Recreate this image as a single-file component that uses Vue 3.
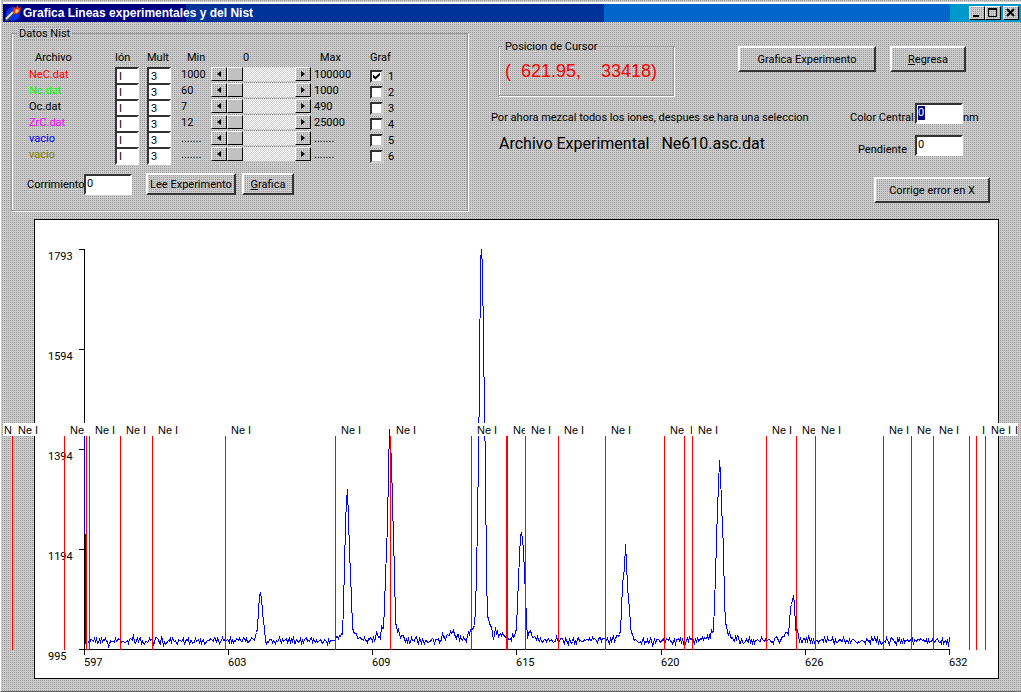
<script setup>
import { reactive, ref } from 'vue'

const rows = reactive([
  { file: 'NeC.dat', color: '#ff0000', ion: 'I', mult: '3', min: '1000', max: '100000', on: true },
  { file: 'Nc.dat', color: '#00ff00', ion: 'I', mult: '3', min: '60', max: '1000', on: false },
  { file: 'Oc.dat', color: '#000000', ion: 'I', mult: '3', min: '7', max: '490', on: false },
  { file: 'ZrC.dat', color: '#ff00ff', ion: 'I', mult: '3', min: '12', max: '25000', on: false },
  { file: 'vacio', color: '#0000ff', ion: 'I', mult: '3', min: '.......', max: '.......', on: false },
  { file: 'vacio', color: '#808000', ion: 'I', mult: '3', min: '.......', max: '.......', on: false }
])
const levels = reactive([0, 0, 0, 0, 0, 0])
const shift = ref('0')
const center = ref('0')
const slope = ref('0')

const yTicks = [1793, 1594, 1394, 1194, 995].map((v, i) => ({ v, y: 249 + i * 100 }))
const xTicks = [
  [597, 84], [603, 228], [609, 372], [615, 516], [620, 661], [626, 805], [632, 949]
].map(([v, x]) => ({ v, x }))

const lines = [12, 64, 86, 89, 120, 152, 225, 335, 390, 471, 506, 507, 525, 558, 605, 664,
  684, 692, 766, 796, 815, 883, 911, 933, 969, 976, 985]

// Line labels: box start, box width, visible text.
const labels = [
  [3, 9, 'N'], [12, 26, 'Ne I'], [64, 26, 'Ne'], [89, 26, 'Ne I'], [120, 26, 'Ne I'], [152, 26, 'Ne I'],
  [225, 26, 'Ne I'], [335, 26, 'Ne I'], [390, 26, 'Ne I'], [471, 26, 'Ne I'], [507, 18, 'Ne'],
  [525, 26, 'Ne I'], [558, 26, 'Ne I'], [605, 26, 'Ne I'], [664, 20, 'Ne'], [684, 8, 'I'],
  [692, 26, 'Ne I'], [766, 26, 'Ne I'], [796, 19, 'Ne'], [815, 26, 'Ne I'], [883, 26, 'Ne I'],
  [911, 22, 'Ne'], [933, 26, 'Ne I'], [976, 9, 'I'], [985, 33, 'Ne I']
].map(([x, w, t]) => ({ x, w, t, tx: x === 3 ? 4 : x + 6 }))

const profile = [
  [87, 641], [247, 640], [255, 638], [257, 628], [258, 610], [259, 595], [260, 593], [261, 597], [262, 612],
  [264, 630], [265, 640], [330, 641], [336, 637], [342, 634], [343, 605], [344, 566], [345, 525], [346, 500],
  [347, 489], [348, 520], [349, 549], [350, 575], [351, 598], [352, 627], [354, 633], [358, 637], [363, 639],
  [373, 638], [380, 635], [383, 628], [384, 605], [385, 577], [386, 550], [387, 525], [388, 470], [389, 429],
  [390, 440], [391, 464], [392, 500], [393, 540], [394, 570], [395, 622], [397, 630], [399, 632], [402, 637],
  [408, 640], [442, 640], [447, 636], [452, 632], [458, 637], [467, 637], [471, 630], [474, 625], [475, 608],
  [476, 575], [477, 520], [478, 455], [479, 380], [480, 260], [481, 249], [482, 268], [483, 340], [484, 410],
  [485, 470], [486, 575], [487, 615], [489, 622], [491, 629], [493, 635], [495, 631], [498, 634], [505, 637],
  [510, 640], [515, 632], [516, 628], [517, 602], [518, 580], [519, 555], [520, 536], [521, 532], [522, 539],
  [523, 550], [524, 572], [525, 595], [526, 620], [527, 636], [529, 632], [532, 637], [538, 640], [610, 640],
  [618, 637], [620, 630], [621, 610], [622, 584], [624, 568], [625, 544], [626, 562], [627, 587], [629, 608],
  [630, 625], [632, 636], [635, 639], [645, 641], [690, 640], [700, 639], [710, 635], [713, 629], [714, 602],
  [715, 577], [716, 540], [717, 508], [718, 485], [719, 460], [720, 472], [721, 505], [722, 525], [723, 550],
  [724, 600], [725, 622], [727, 630], [729, 635], [733, 638], [740, 640], [775, 640], [783, 637], [788, 633],
  [789, 622], [790, 607], [792, 600], [793, 595], [794, 603], [795, 628], [797, 634], [799, 640], [949, 641]
]

function buildTrace() {
  let seed = 97
  const rnd = () => {
    seed = (seed * 16807) % 2147483647
    return seed / 2147483647
  }
  const out = ['M84.5 436V534', 'M85.5 534V644']
  let k = 0
  let d = ''
  for (let x = 87; x <= 949; x++) {
    while (k < profile.length - 2 && profile[k + 1][0] < x) k++
    const [x0, y0] = profile[k]
    const [x1, y1] = profile[k + 1]
    const y = y0 + ((y1 - y0) * (x - x0)) / (x1 - x0)
    const spike = rnd() > 0.94 ? 1.9 : 1
    const noise = y > 628 ? (rnd() + rnd() - 1) * 4.5 * spike : 0
    d += `${d ? 'L' : 'M'}${x + 0.5} ${Math.round(y + noise) + 0.5}`
  }
  out.push(d)
  return out.join('')
}
const trace = buildTrace()
</script>

<template>
  <main class="window">
    <header class="title-bar">
      <svg class="app-icon" width="16" height="16" viewBox="0 0 16 16" aria-hidden="true">
        <circle cx="8" cy="9" r="7" fill="#0033ee" />
        <path d="M0 16V13L7 6L10 8L3 16Z" fill="#444" />
        <path d="M1 14L8 7" stroke="#ddd" stroke-width="2" />
        <path d="M8 7L9 2L11 4L12 0L14 3L16 2L15 7L12 9L9 9Z" fill="#ff3300" />
        <path d="M10 7L11 4L13 5L14 4L13 7L11 8Z" fill="#ffdd88" />
      </svg>
      <h1>Grafica Lineas experimentales y del Nist</h1>
      <div class="window-buttons">
        <button type="button" aria-label="Minimizar">
          <svg width="12" height="10" viewBox="0 0 12 10"><path d="M2 8h6" stroke="#000" stroke-width="2" /></svg>
        </button>
        <button type="button" aria-label="Maximizar">
          <svg width="12" height="10" viewBox="0 0 12 10"><path d="M1.500 1v7.500h8V1" fill="none" stroke="#000" /><path d="M1 1h9" stroke="#000" stroke-width="2" /></svg>
        </button>
        <button type="button" class="close" aria-label="Cerrar">
          <svg width="12" height="10" viewBox="0 0 12 10"><path d="M2 1L9 8M9 1L2 8" stroke="#000" stroke-width="2" /></svg>
        </button>
      </div>
    </header>

    <section class="controls">
      <fieldset class="nist">
        <legend>Datos Nist</legend>
        <table>
          <colgroup>
            <col class="c-file" /><col class="c-ion" /><col class="c-mult" /><col class="c-min" />
            <col class="c-bar" /><col class="c-max" /><col class="c-graf" />
          </colgroup>
          <thead>
            <tr>
              <th class="indent">Archivo</th><th>Ión</th><th>Mult</th><th class="indent">Min</th>
              <th class="zero">0</th><th class="indent">Max</th><th>Graf</th>
            </tr>
          </thead>
          <tbody>
            <tr v-for="(row, i) in rows" :key="i">
              <td :style="{ color: row.color }">{{ row.file }}</td>
              <td><input v-model="row.ion" class="field cell" type="text" :aria-label="'Ión ' + (i + 1)" /></td>
              <td><input v-model="row.mult" class="field cell" type="text" :aria-label="'Mult ' + (i + 1)" /></td>
              <td>{{ row.min }}</td>
              <td>
                <div class="scroll">
                  <button type="button" aria-label="Menos" @click="levels[i] = Math.max(0, levels[i] - 1)">
                    <svg width="4" height="6" viewBox="0 0 4 6"><path d="M4 0v6L0 3z" /></svg>
                  </button>
                  <input v-model.number="levels[i]" type="range" min="0" max="100" :aria-label="'Nivel ' + (i + 1)" />
                  <button type="button" aria-label="Más" @click="levels[i] = Math.min(100, levels[i] + 1)">
                    <svg width="4" height="6" viewBox="0 0 4 6"><path d="M0 0v6L4 3z" /></svg>
                  </button>
                </div>
              </td>
              <td>{{ row.max }}</td>
              <td><label class="check"><input v-model="row.on" type="checkbox" />{{ i + 1 }}</label></td>
            </tr>
          </tbody>
        </table>
        <div class="actions">
          <label for="shift">Corrimiento</label>
          <input id="shift" v-model="shift" class="field" type="text" />
          <button type="button" class="btn read">Lee Experimento</button>
          <button type="button" class="btn plot"><u>G</u>rafica</button>
        </div>
      </fieldset>

      <div class="side">
        <div class="side-row">
          <fieldset class="cursor">
            <legend>Posicion de Cursor</legend>
            <output>(&nbsp; 621.95, &nbsp;&nbsp; 33418)</output>
          </fieldset>
          <div class="top-buttons">
            <button type="button" class="btn tall graph">Grafica Experimento</button>
            <button type="button" class="btn tall back"><u>R</u>egresa</button>
          </div>
        </div>
        <div class="side-row lower">
          <div class="notes">
            <p class="note">Por ahora mezcal todos los iones, despues se hara una seleccion</p>
            <p class="file">Archivo Experimental&nbsp;&nbsp; Ne610.asc.dat</p>
          </div>
          <form class="adjust" @submit.prevent>
            <div class="pair">
              <label for="center">Color Central</label>
              <input id="center" v-model="center" class="field selected" type="text" />
              <span class="unit">nm</span>
            </div>
            <div class="pair">
              <label for="slope" class="slope">Pendiente</label>
              <input id="slope" v-model="slope" class="field" type="text" />
            </div>
            <button type="submit" class="btn tall fix">Corrige error en X</button>
          </form>
        </div>
      </div>
    </section>

    <svg class="chart" viewBox="0 211 1021 480" role="img" aria-label="Espectro experimental">
      <rect x="34.500" y="219.500" width="964" height="459" fill="#fff" stroke="#000" />
      <g stroke="#000" fill="none">
        <path d="M84.500 249V650M79 649.500H950" />
        <path v-for="t in yTicks" :key="t.v" :d="`M79 ${t.y + 0.5}h6`" />
        <path v-for="t in xTicks" :key="t.v" :d="`M${t.x + 0.5} 650v5`" />
      </g>
      <g class="chart-text">
        <text v-for="t in yTicks" :key="t.v" x="48" :y="t.y + 11">{{ t.v }}</text>
        <text v-for="t in xTicks" :key="t.v" :x="t.x" y="666">{{ t.v }}</text>
      </g>
      <path :d="trace" class="trace" />
      <path v-for="x in lines" :key="x" :d="`M${x + 0.5} 436V650`" stroke="#ff0000" />
      <g class="chart-text line-labels">
        <g v-for="l in labels" :key="l.x">
          <rect :x="l.x" y="423" :width="l.w" height="13" fill="#fff" />
          <text :x="l.tx" y="434">{{ l.t }}</text>
        </g>
        <text x="1015" y="434">I</text>
      </g>
    </svg>
  </main>
</template>

<style>
body {
  background: #c0c0c0;
}
</style>

<style scoped>
.window {
  --dither: conic-gradient(#999 25%, #ccc 0) 0 0 / 2px 2px;
  box-sizing: border-box;
  min-height: 100vh;
  background: var(--dither);
  border-left: 1px solid #fff;
  border-bottom: 1px solid #666;
  color: #000;
  font: 11px/13px Roboto, "Liberation Sans", Arial, sans-serif;
  overflow: hidden;
}
button, input {
  font: inherit;
  color: inherit;
  box-sizing: border-box;
  margin: 0;
}
.title-bar {
  display: flex;
  align-items: center;
  height: 18px;
  margin: 4px 0 0 2px;
  padding: 0 2px;
  background: linear-gradient(90deg, #000080 0 18%, #003399 0 59%, #0066cc 0 93%, #0099cc 0);
  box-shadow: 0 -2px #fff;
}
.title-bar h1 {
  margin: 0 0 0 2px;
  flex: 1;
  color: #fff;
  font: bold 12px/18px "Liberation Sans", Arial, sans-serif;
}
.window-buttons {
  display: flex;
}
.window-buttons button, .scroll button {
  display: flex;
  align-items: center;
  justify-content: center;
  padding: 0;
  background: var(--dither);
  border: 1px solid;
  border-color: #fff #000 #000 #fff;
}
.window-buttons button {
  width: 16px;
  height: 14px;
}
.window-buttons .close {
  margin-left: 2px;
}
.controls {
  display: flex;
  padding: 5px 22px 0 10px;
}
fieldset {
  box-sizing: border-box;
  min-width: 0;
  margin: 0;
  border: 1px solid #999;
  box-shadow: 1px 1px #fff, inset 1px 0 #fff;
}
legend {
  padding: 0 2px;
  background: var(--dither);
}
.nist {
  flex: 0 0 457px;
  height: 184px;
  padding: 7px 0 0 17px;
}
.nist legend {
  margin-left: -12px;
}
table {
  width: 420px;
  border-collapse: collapse;
  table-layout: fixed;
}
th {
  height: 20px;
  padding: 0;
  font-weight: normal;
  text-align: left;
  vertical-align: middle;
}
td {
  height: 16px;
  padding: 0;
  line-height: 15px;
  vertical-align: top;
  white-space: nowrap;
}
.c-file { width: 86px; }
.c-ion { width: 32px; }
.c-mult { width: 34px; }
.c-min { width: 30px; }
.c-bar { width: 103px; }
.c-max { width: 56px; }
.c-graf { width: 79px; }
.indent { padding-left: 6px; }
.zero { padding-left: 32px; }
.field {
  width: 48px;
  height: 21px;
  padding: 0 0 2px 1px;
  background: #fff;
  border: 2px solid;
  border-color: #333 #fff #fff #333;
  border-radius: 0;
  outline: 0;
}
.cell {
  display: block;
  width: 24px;
  height: 16px;
  padding: 0 0 0 2px;
  border-bottom-width: 0;
}
tr:last-child .cell {
  height: 18px;
  border-bottom-width: 2px;
}
.selected {
  color: #fff;
  background: linear-gradient(90deg, #ffff66 1px, #000080 0) 0 1px / 8px 14px no-repeat #fff;
}
.scroll {
  display: flex;
  width: 100px;
  height: 14px;
}
.scroll button {
  width: 16px;
  height: 14px;
}
.scroll input {
  appearance: none;
  flex: 1;
  min-width: 0;
  height: 14px;
  background: conic-gradient(#ccc 25%, #fff 0 50%, #ccc 0 75%, #fff 0) 0 0 / 2px 2px;
}
.scroll input::-webkit-slider-thumb {
  appearance: none;
  width: 16px;
  height: 14px;
  box-sizing: border-box;
  background: #c0c0c0;
  border: 1px solid;
  border-color: #fff #000 #000 #fff;
}
.check {
  display: flex;
  align-items: center;
  gap: 5px;
  height: 16px;
  padding-top: 2px;
  box-sizing: border-box;
}
.check input {
  appearance: none;
  position: relative;
  width: 13px;
  height: 13px;
  background: #fff;
  border: 2px solid;
  border-color: #333 #ccc #ccc #333;
}
.check input:checked::before {
  content: "";
  position: absolute;
  inset: 1px;
  background: #000;
  clip-path: polygon(0 30%, 35% 60%, 100% 0, 100% 40%, 35% 100%, 0 70%);
}
.actions {
  display: flex;
  align-items: center;
  margin-top: 8px;
}
.actions label {
  width: 57px;
  margin-left: -2px;
}
.btn {
  padding: 0;
  background: var(--dither);
  border: 2px solid;
  border-color: #fff #333 #333 #fff;
  border-radius: 0;
  white-space: nowrap;
}
.read {
  width: 90px;
  height: 22px;
  margin-left: 14px;
}
.plot {
  width: 52px;
  height: 22px;
  margin-left: 6px;
}
.tall {
  height: 26px;
}
.graph { width: 138px; }
.back { width: 76px; }
.fix {
  width: 116px;
  margin: 10px 0 0 24px;
}
.side {
  flex: 1;
  padding: 13px 0 0 23px;
}
.side-row {
  display: flex;
  justify-content: space-between;
}
.cursor {
  width: 176px;
  height: 56px;
  margin-left: 7px;
  padding: 6px 0 0 6px;
}
.cursor legend {
  margin-left: -2px;
}
.cursor output {
  display: block;
  color: #ff0000;
  font: 18px/24px "Liberation Sans", Arial, sans-serif;
  white-space: nowrap;
}
.top-buttons {
  display: flex;
  gap: 14px;
  padding: 6px 33px 0 0;
}
.lower {
  margin-top: 7px;
}
.notes p {
  margin: 0;
  white-space: nowrap;
}
.notes .note {
  padding-top: 8px;
}
.notes .file {
  padding: 10px 0 0 8px;
  font-size: 16px;
  line-height: 20px;
}
.adjust {
  width: 149px;
}
.pair {
  display: flex;
  align-items: flex-end;
  height: 21px;
  margin-bottom: 11px;
}
.pair label {
  box-sizing: border-box;
  width: 65px;
}
.pair .slope {
  padding-left: 8px;
}
.chart {
  display: block;
  width: calc(100% + 1px);
  margin-left: -1px;
}
.chart-text {
  font-size: 11px;
}
.line-labels {
  font-family: "Liberation Sans", Arial, sans-serif;
}
.trace {
  fill: none;
  stroke: #0000ff;
  shape-rendering: crispEdges;
}
</style>
